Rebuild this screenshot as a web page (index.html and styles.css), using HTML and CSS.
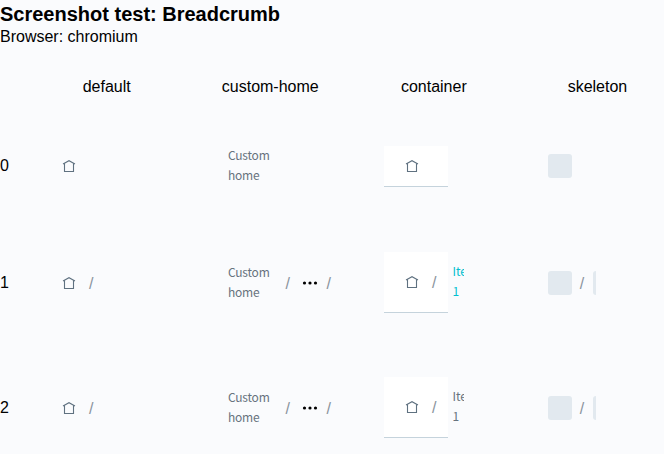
FILE: index.html
```html
<!DOCTYPE html>
<html lang="en">
<head>
<meta charset="utf-8">
<title>Breadcrumb</title>
<link rel="stylesheet" href="styles.css">
</head>
<body>
<svg class="defs" aria-hidden="true">
  <symbol id="home" viewBox="0 0 14 14"><path d="M1 4.9 L7 1.7 L13 4.9 M2.5 4.5 V12.5 H11.5 V4.5" fill="none" stroke="currentColor" stroke-width="1.1"/></symbol>
  <symbol id="dots" viewBox="0 0 16 4"><circle cx="2.5" cy="2" r="1.6"/><circle cx="8" cy="2" r="1.6"/><circle cx="13.5" cy="2" r="1.6"/></symbol>
</svg>
<h1>Screenshot test: Breadcrumb</h1>
<p class="browser">Browser: chromium</p>
<main class="grid">
  <span></span><span class="head">default</span><span class="head">custom-home</span><span class="head">container</span><span class="head">skeleton</span>

  <span class="label first">0</span>
  <div class="cell plain first"><svg class="home"><use href="#home"/></svg></div>
  <div class="cell custom first"><span class="link">Custom home</span></div>
  <div class="cell first"><div class="box short"><svg class="home"><use href="#home"/></svg></div></div>
  <div class="cell first"><i class="bone"></i></div>

  <span class="label">1</span>
  <div class="cell plain"><svg class="home"><use href="#home"/></svg><span class="slash">/</span></div>
  <div class="cell custom"><span class="link">Custom home</span><span class="slash">/</span><svg class="dots"><use href="#dots"/></svg><span class="slash">/</span></div>
  <div class="cell"><div class="box"><svg class="home"><use href="#home"/></svg><span class="slash">/</span><span class="item current">Item 1</span></div></div>
  <div class="cell"><i class="bone"></i><span class="slash">/</span><i class="bone cut"></i></div>

  <span class="label">2</span>
  <div class="cell plain"><svg class="home"><use href="#home"/></svg><span class="slash">/</span></div>
  <div class="cell custom"><span class="link">Custom home</span><span class="slash">/</span><svg class="dots"><use href="#dots"/></svg><span class="slash">/</span></div>
  <div class="cell"><div class="box"><svg class="home"><use href="#home"/></svg><span class="slash">/</span><span class="item">Item 1</span></div></div>
  <div class="cell"><i class="bone"></i><span class="slash">/</span><i class="bone cut"></i></div>
</main>
</body>
</html>
```
FILE: styles.css
```css
* { box-sizing: border-box; }
html, body { height: 454px; overflow: hidden; }
body {
  margin: 0;
  background: #fafbfd;
  color: #000;
  font: 16px/18px "Liberation Sans", Arial, sans-serif;
}
.defs { position: absolute; width: 0; height: 0; }
h1 { margin: 0; padding-top: 3px; font-size: 20px; line-height: 23px; }
.browser { margin: 0; padding-top: 2px; height: 33px; }
.grid {
  display: grid;
  grid-template-columns: 25px 163.5px 163.5px 163.7px 163.5px;
  grid-template-rows: 55px 106px 125px 125px;
  align-items: center;
}
.head { text-align: center; }
.first { margin-bottom: 2px; }
.cell {
  display: flex;
  align-items: center;
  padding-left: 32px;
  font: 12px/20px "Noto Sans CJK SC", sans-serif;
  color: #67737e;
}
.plain { padding-left: 37px; }
.custom { padding-left: 39.5px; }
.home { flex: none; width: 14px; height: 14px; color: #5f7180; }
.slash {
  flex: none;
  width: 6px;
  margin-left: 13px;
  padding-top: 2px;
  font: 16px/20px "Liberation Sans", Arial, sans-serif;
  color: #8a949d;
}
.link { width: 44px; padding-bottom: 2px; letter-spacing: -0.22px; }
.dots { flex: none; width: 16px; height: 4px; margin-left: 11px; fill: #000; }
.custom .slash { position: relative; left: 0.5px; }
.custom .slash + .dots + .slash { margin-left: 8px; }
.box {
  display: flex;
  align-items: center;
  width: 64px;
  height: 61px;
  padding-left: 21px;
  background: #fff;
  border-bottom: 1px solid #c5d3dc;
}
.short { height: 41px; }
.item { flex: none; width: 11.5px; margin-left: 14.5px; padding-bottom: 2px; overflow: hidden; }
.current { color: #00bfd0; }
.bone { flex: none; width: 24px; height: 24px; border-radius: 3px; background: #e2e9ef; }
.bone + .slash { margin-left: 8px; }
.cut { width: 3px; margin-left: 7px; border-radius: 3px 0 0 3px; }
```
